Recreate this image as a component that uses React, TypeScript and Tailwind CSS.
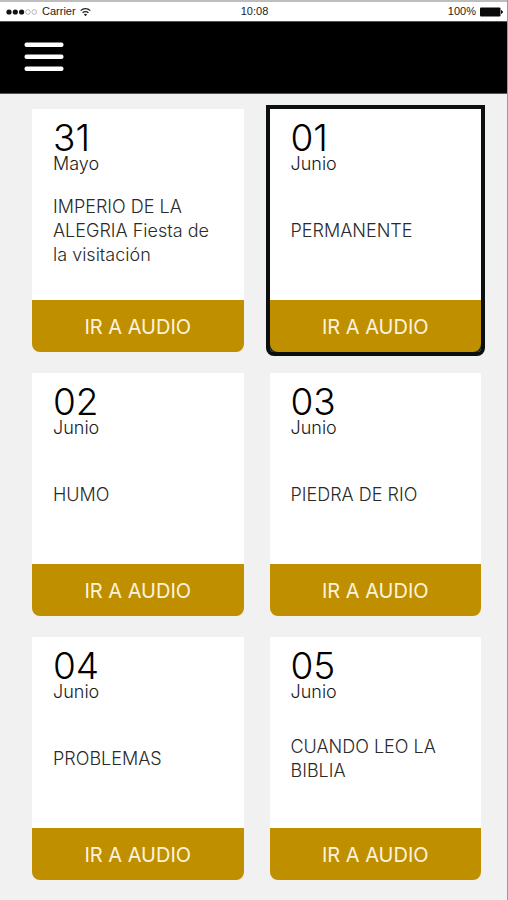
const days = [
  { day: "31", month: "Mayo", title: "IMPERIO DE LA ALEGRIA Fiesta de la visitación" },
  { day: "01", month: "Junio", title: "PERMANENTE", selected: true },
  { day: "02", month: "Junio", title: "HUMO" },
  { day: "03", month: "Junio", title: "PIEDRA DE RIO" },
  { day: "04", month: "Junio", title: "PROBLEMAS" },
  { day: "05", month: "Junio", title: "CUANDO LEO LA BIBLIA" },
];

function StatusBar() {
  return (
    <div className="grid grid-cols-3 items-center h-[21px] pl-1.5 pr-1 border-t-2 border-[#bdbdbd] bg-white font-['Liberation_Sans',sans-serif] text-[11px] leading-none text-[#222]">
      <div className="flex items-center gap-1">
        <svg className="w-8 h-2" viewBox="0 0 32 8">
          <circle cx="3" cy="4" r="2.6" fill="#111" />
          <circle cx="9.3" cy="4" r="2.6" fill="#111" />
          <circle cx="15.6" cy="4" r="2.6" fill="#111" />
          <circle cx="21.9" cy="4" r="2.3" fill="none" stroke="#888" strokeWidth="0.6" />
          <circle cx="28.2" cy="4" r="2.3" fill="none" stroke="#888" strokeWidth="0.6" />
        </svg>
        <span>Carrier</span>
        <svg className="w-[11px] h-2.5" viewBox="0 0 11 10" fill="none" stroke="#222" strokeWidth="1.3">
          <path d="M0.7 3.6C3.4 0.9 7.6 0.9 10.3 3.6M2.6 5.8C4.2 4.2 6.8 4.2 8.4 5.8" />
          <path d="M5.5 9.2L3.9 7.5Q5.5 6.1 7.1 7.5Z" fill="#222" stroke="none" />
        </svg>
      </div>
      <span className="text-center">10:08</span>
      <div className="flex items-center justify-end gap-1">
        <span>100%</span>
        <svg className="w-[23px] h-2.5" viewBox="0 0 23 10" fill="#0a0a0a">
          <rect x="0" y="0.5" width="20.5" height="9" rx="1" />
          <path d="M21 3Q23 3.8 23 5T21 7Z" />
        </svg>
      </div>
    </div>
  );
}

export default function App() {
  return (
    <div className="min-h-screen bg-[#f1f1f1] border-r border-[#9a9a9a] font-['Inter',sans-serif] font-light">
      <StatusBar />
      <header className="flex items-center h-[73px] pl-6 bg-black border-y border-[#555]">
        <button type="button" aria-label="Menú" className="flex">
          <svg className="w-10 h-8" viewBox="0 0 40 32" fill="#fff">
            <rect x="0.5" y="0.5" width="39" height="4.6" rx="2" />
            <rect x="0.5" y="12.5" width="39" height="4.6" rx="2" />
            <rect x="0.5" y="24.5" width="39" height="4.6" rx="2" />
          </svg>
        </button>
      </header>

      <main className="grid grid-cols-2 gap-x-[26px] gap-y-[21px] pt-[15px] pb-5 pl-8 pr-[26px]">
        {days.map((item) => (
          <article
            key={item.day}
            className={
              item.selected
                ? "flex flex-col bg-[#1b1f20] rounded-b-sm outline-4 outline-[#0c0f10]"
                : "flex flex-col"
            }
          >
            <div className="flex flex-col h-[191px] pl-[21px] pr-6 pt-3 pb-3 bg-white">
              <p className="text-[37px] leading-[34px] text-black">{item.day}</p>
              <p className="text-[18px] leading-[18px] text-[#1a1a1a]">{item.month}</p>
              <div className="flex flex-1 items-center">
                <h2 className="text-[18px] leading-6 text-[#2a2a2a]">{item.title}</h2>
              </div>
            </div>
            <button
              type="button"
              className="h-[52px] pt-0.5 rounded-b-lg bg-[#bf8f00] text-[20px] font-normal text-[#fdf3dc]"
            >
              IR A AUDIO
            </button>
          </article>
        ))}
      </main>
    </div>
  );
}
